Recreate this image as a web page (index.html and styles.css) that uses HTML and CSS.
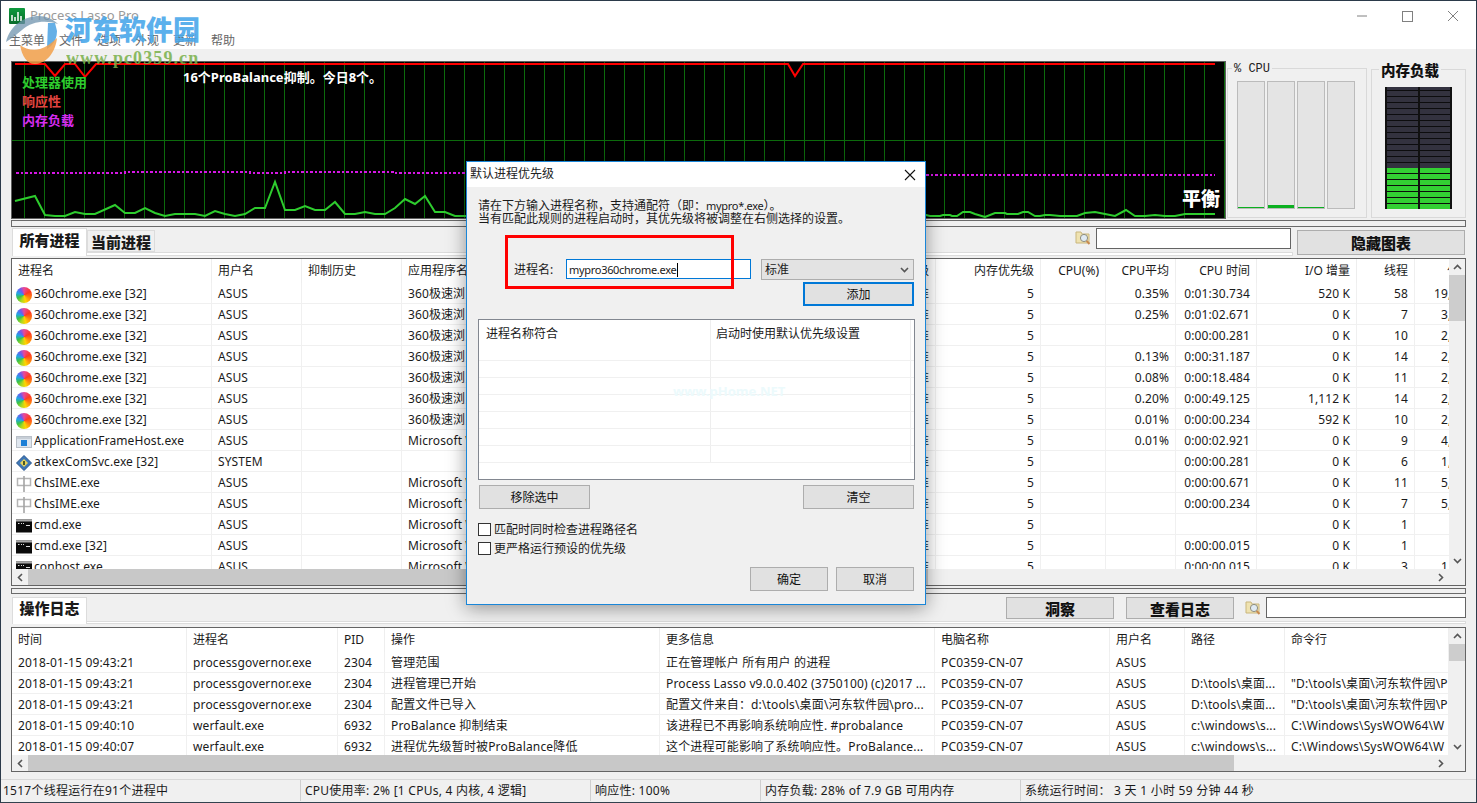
FILE: index.html
```html
<!DOCTYPE html>
<html lang="zh-CN">
<head>
<meta charset="utf-8">
<title>Process Lasso Pro</title>
<link rel="stylesheet" href="styles.css">
</head>
<body>
<svg class="defs" aria-hidden="true">
  <symbol id="i-up" viewBox="0 0 9 6"><path d="M1 5 4.5 1.5 8 5" fill="none" stroke="#555" stroke-width="1.6"/></symbol>
  <symbol id="i-down" viewBox="0 0 9 6"><path d="M1 1 4.5 4.5 8 1" fill="none" stroke="#555" stroke-width="1.6"/></symbol>
  <symbol id="i-left" viewBox="0 0 6 9"><path d="M5 1 1.5 4.5 5 8" fill="none" stroke="#555" stroke-width="1.6"/></symbol>
  <symbol id="i-right" viewBox="0 0 6 9"><path d="M1 1 4.5 4.5 1 8" fill="none" stroke="#555" stroke-width="1.6"/></symbol>
  <symbol id="i-find" viewBox="0 0 16 16">
    <path d="M1 2h5l1 2h7v9H1z" fill="#efe2b0" stroke="#c9b67c"/>
    <circle cx="9" cy="8" r="3.6" fill="#dfeaf3" stroke="#8d8d80"/>
    <path d="M11.6 10.8 14.5 14" stroke="#c88a50" stroke-width="2"/>
  </symbol>
  <symbol id="i-frame" viewBox="0 0 16 16">
    <rect x="0.5" y="2.5" width="15" height="11" fill="#dfe6ee" stroke="#b9c0c8"/>
    <rect x="1" y="3" width="14" height="2" fill="#c7ced6"/>
    <rect x="5" y="6" width="6" height="6" fill="#1c7fd6"/>
  </symbol>
  <symbol id="i-diamond" viewBox="0 0 16 16">
    <path d="M8 0.5 15.5 8 8 15.5 0.5 8z" fill="#3f78b8" stroke="#25528a"/>
    <path d="M8 4 12 8 8 12 4 8z" fill="#e8d35a"/>
    <path d="M7 6h2v4H7z" fill="#4a5a28"/>
  </symbol>
  <symbol id="i-ime" viewBox="0 0 16 16">
    <path d="M1.5 2.5h13v7h-13z" fill="#fff" stroke="#b4b4b4" stroke-width="1.5"/>
    <path d="M8 0v16" stroke="#a4a4a4" stroke-width="1.6"/>
  </symbol>
  <symbol id="i-cmd" viewBox="0 0 16 16">
    <rect width="16" height="13" y="1.5" fill="#0a0a0a"/>
    <rect width="16" height="2" y="1.5" fill="#a9a9a9"/>
    <path d="M2 5h1.5v1H2zM5 5h1v1H5zM7 5h1v1H7zM10 7h4v1h-4z" fill="#ddd"/>
  </symbol>
</svg>

<div class="app">
  <header class="head">
    <div class="titlebar">
      <svg class="appicon" viewBox="0 0 16 16" aria-hidden="true">
        <defs><linearGradient id="appg" x1="0" y1="0" x2="0" y2="1"><stop offset="0" stop-color="#0d9a3e"/><stop offset="1" stop-color="#0a6a2a"/></linearGradient></defs>
        <rect width="16" height="16" rx="1" fill="url(#appg)"/>
        <path d="M3 7v6M6 9v4M9 4v9M12 8v5" stroke="#fff" stroke-width="1.5"/>
      </svg>
      <span class="apptitle">Process Lasso Pro</span>
      <div class="winbtns">
        <svg viewBox="0 0 10 10" class="wb wb-min"><path d="M0 5h10" stroke="#808080"/></svg>
        <svg viewBox="0 0 11 11" class="wb wb-max"><rect x=".5" y=".5" width="10" height="10" fill="none" stroke="#808080"/></svg>
        <svg viewBox="0 0 10 10" class="wb wb-close"><path d="M0 0 10 10M10 0 0 10" stroke="#808080"/></svg>
      </div>
    </div>
    <nav class="menu"><span>主菜单</span><span>文件</span><span>选项</span><span>外观</span><span>更新</span><span>帮助</span></nav>
  </header>

  <section class="graphs">
    <svg class="graph" viewBox="12 62 1213 156" aria-label="图表">
      <defs><pattern id="grid" x="4" y="0" width="20" height="20" patternUnits="userSpaceOnUse"><rect width="1" height="20" fill="#0c6a0c"/></pattern></defs>
      <rect x="12" y="62" width="1213" height="156" fill="#000"/>
      <rect x="12" y="62" width="1213" height="156" fill="url(#grid)"/>
      <path d="M12 140.5H1225" stroke="#0c6a0c"/>
      <polyline class="l-mem" points="16,173 125,173 125,172 250,172 250,173 285,173 285,172 395,172 395,173 466,173"/>
      <polyline class="l-mem" points="926,175 1215,175"/>
      <polyline class="l-cpu" points="15,201 35,196 45,215 55,216 65,216 75,212 85,214 95,214 115,205 125,213 135,213 145,208 155,213 165,216 175,214 195,214 205,216 215,211 225,214 235,216 245,214 255,208 265,208 275,182 285,210 295,210 305,206 315,210 325,210 335,202 345,214 355,214 365,212 375,214 385,214 395,208 405,199 415,204 425,196 435,212 445,212 455,216 465,216 926,215 930,216 940,216 943,215 950,215 952,216 957,216 963,212 970,212 975,214 985,217 995,213 1005,213 1007,214 1018,214 1023,212 1028,212 1035,216 1040,216 1045,215 1050,215 1060,216 1077,216 1085,213 1095,212 1105,214 1115,216 1126,210 1135,216 1145,216 1155,215 1165,216 1175,216 1185,214 1215,214"/>
      <polyline class="l-resp" points="15,64 45,64 55,76 65,64 75,64 85,77 96,64 788,64 795,76 803,64 1215,64"/>
      <text class="g-label g-green" x="22" y="87">处理器使用</text>
      <text class="g-label g-red" x="22" y="106">响应性</text>
      <text class="g-label g-mag" x="22" y="125">内存负载</text>
      <text class="g-label g-white" x="183" y="82">16个ProBalance抑制。今日8个。</text>
      <text class="g-mode" x="1182" y="206">平衡</text>
    </svg>
    <fieldset class="cpubox">
      <legend class="cpulegend">% CPU</legend>
      <div class="bars">
        <div class="bar"><div class="fill f1"></div></div>
        <div class="bar"><div class="fill f3"></div></div>
        <div class="bar"><div class="fill f1"></div></div>
        <div class="bar"></div>
      </div>
    </fieldset>
    <fieldset class="membox">
      <legend class="memlegend">内存负载</legend>
      <div class="meter">
        <div class="mcol"><div class="m-dark"></div><div class="m-green"></div></div>
        <div class="mcol"><div class="m-dark"></div><div class="m-green"></div></div>
      </div>
    </fieldset>
  </section>

  <div class="splitter"></div>

  <section class="toolrow">
    <div class="strip">
      <div class="striphead">
        <div class="tab active tab-wide">所有进程</div>
        <div class="tab tab-mid">当前进程</div>
        <svg class="findicon"><use href="#i-find"/></svg>
        <div class="search s-top"></div>
      </div>
      <div class="band"></div>
    </div>
    <button class="btn btn-bold btn-hide">隐藏图表</button>
  </section>

  <section class="pane pane-proc">
    <div class="tablewrap">
      <div class="tbox tbox-proc">
      <table class="grid proc">
        <colgroup><col class="c200"><col class="c90"><col class="c100"><col class="c300"><col class="c234"><col class="c105"><col class="c65"><col class="c70"><col class="c81"><col class="c100"><col class="c58"><col class="c75"></colgroup>
        <thead><tr><th>进程名</th><th>用户名</th><th>抑制历史</th><th>应用程序名</th><th class="r">优先级</th><th class="r">内存优先级</th><th class="r">CPU(%)</th><th class="r">CPU平均</th><th class="r">CPU 时间</th><th class="r">I/O 增量</th><th class="r">线程</th><th class="r">句柄数</th></tr></thead>
        <tbody>
          <tr><td class="n"><i class="ball"></i>360chrome.exe [32]</td><td>ASUS</td><td></td><td>360极速浏览器</td><td class="r">标准</td><td class="r">5</td><td></td><td class="r">0.35%</td><td class="r">0:01:30.734</td><td class="r">520 K</td><td class="r">58</td><td class="r">19,536 K</td></tr>
          <tr><td class="n"><i class="ball"></i>360chrome.exe [32]</td><td>ASUS</td><td></td><td>360极速浏览器</td><td class="r">标准</td><td class="r">5</td><td></td><td class="r">0.25%</td><td class="r">0:01:02.671</td><td class="r">0 K</td><td class="r">7</td><td class="r">3,532 K</td></tr>
          <tr><td class="n"><i class="ball"></i>360chrome.exe [32]</td><td>ASUS</td><td></td><td>360极速浏览器</td><td class="r">标准</td><td class="r">5</td><td></td><td></td><td class="r">0:00:00.281</td><td class="r">0 K</td><td class="r">10</td><td class="r">2,108 K</td></tr>
          <tr><td class="n"><i class="ball"></i>360chrome.exe [32]</td><td>ASUS</td><td></td><td>360极速浏览器</td><td class="r">标准</td><td class="r">5</td><td></td><td class="r">0.13%</td><td class="r">0:00:31.187</td><td class="r">0 K</td><td class="r">14</td><td class="r">2,240 K</td></tr>
          <tr><td class="n"><i class="ball"></i>360chrome.exe [32]</td><td>ASUS</td><td></td><td>360极速浏览器</td><td class="r">标准</td><td class="r">5</td><td></td><td class="r">0.08%</td><td class="r">0:00:18.484</td><td class="r">0 K</td><td class="r">11</td><td class="r">2,196 K</td></tr>
          <tr><td class="n"><i class="ball"></i>360chrome.exe [32]</td><td>ASUS</td><td></td><td>360极速浏览器</td><td class="r">标准</td><td class="r">5</td><td></td><td class="r">0.20%</td><td class="r">0:00:49.125</td><td class="r">1,112 K</td><td class="r">14</td><td class="r">2,304 K</td></tr>
          <tr><td class="n"><i class="ball"></i>360chrome.exe [32]</td><td>ASUS</td><td></td><td>360极速浏览器</td><td class="r">标准</td><td class="r">5</td><td></td><td class="r">0.01%</td><td class="r">0:00:00.234</td><td class="r">592 K</td><td class="r">10</td><td class="r">2,012 K</td></tr>
          <tr><td class="n"><svg class="ic"><use href="#i-frame"/></svg>ApplicationFrameHost.exe</td><td>ASUS</td><td></td><td>Microsoft Windows</td><td class="r">标准</td><td class="r">5</td><td></td><td class="r">0.01%</td><td class="r">0:00:02.921</td><td class="r">0 K</td><td class="r">9</td><td class="r">4,120 K</td></tr>
          <tr><td class="n"><svg class="ic"><use href="#i-diamond"/></svg>atkexComSvc.exe [32]</td><td>SYSTEM</td><td></td><td></td><td class="r">标准</td><td class="r">5</td><td></td><td></td><td class="r">0:00:00.281</td><td class="r">0 K</td><td class="r">6</td><td class="r">1,024 K</td></tr>
          <tr><td class="n"><svg class="ic"><use href="#i-ime"/></svg>ChsIME.exe</td><td>ASUS</td><td></td><td>Microsoft Windows</td><td class="r">标准</td><td class="r">5</td><td></td><td></td><td class="r">0:00:00.671</td><td class="r">0 K</td><td class="r">11</td><td class="r">5,048 K</td></tr>
          <tr><td class="n"><svg class="ic"><use href="#i-ime"/></svg>ChsIME.exe</td><td>ASUS</td><td></td><td>Microsoft Windows</td><td class="r">标准</td><td class="r">5</td><td></td><td></td><td class="r">0:00:00.234</td><td class="r">0 K</td><td class="r">7</td><td class="r">5,016 K</td></tr>
          <tr><td class="n"><svg class="ic"><use href="#i-cmd"/></svg>cmd.exe</td><td>ASUS</td><td></td><td>Microsoft Windows</td><td class="r">标准</td><td class="r">5</td><td></td><td></td><td></td><td class="r">0 K</td><td class="r">1</td><td class="r"></td></tr>
          <tr><td class="n"><svg class="ic"><use href="#i-cmd"/></svg>cmd.exe [32]</td><td>ASUS</td><td></td><td>Microsoft Windows</td><td class="r">标准</td><td class="r">5</td><td></td><td></td><td class="r">0:00:00.015</td><td class="r">0 K</td><td class="r">1</td><td class="r"></td></tr>
          <tr><td class="n"><svg class="ic"><use href="#i-cmd"/></svg>conhost.exe</td><td>ASUS</td><td></td><td>Microsoft Windows</td><td class="r">标准</td><td class="r">5</td><td></td><td></td><td class="r">0:00:00.015</td><td class="r">0 K</td><td class="r">3</td><td class="r">1,204 K</td></tr>
        </tbody>
      </table>
      </div>
      <div class="vscroll">
        <svg class="arrow-v"><use href="#i-up"/></svg>
        <div class="track"><div class="thumb thumb-proc"></div></div>
        <svg class="arrow-v"><use href="#i-down"/></svg>
      </div>
    </div>
    <div class="hscroll">
      <svg class="arrow-h"><use href="#i-left"/></svg>
      <div class="htrack"><div class="hthumb hthumb-proc"></div></div>
      <svg class="arrow-h"><use href="#i-right"/></svg>
    </div>
  </section>

  <div class="splitter sp2"></div>

  <section class="toolrow tool-log">
    <div class="strip">
      <div class="striphead head-log">
        <div class="tab active tab-log">操作日志</div>
        <button class="btn btn-bold btn-a">洞察</button>
        <button class="btn btn-bold btn-b">查看日志</button>
        <svg class="findicon fi-log"><use href="#i-find"/></svg>
        <div class="search s-log"></div>
      </div>
      <div class="band"></div>
    </div>
  </section>

  <section class="pane pane-log">
    <div class="tablewrap">
      <div class="tbox tbox-log">
      <table class="grid log">
        <colgroup><col class="l175"><col class="l151"><col class="l47"><col class="l275"><col class="l275"><col class="l175"><col class="l75"><col class="l100"><col class="l164"></colgroup>
        <thead><tr><th>时间</th><th>进程名</th><th>PID</th><th>操作</th><th>更多信息</th><th>电脑名称</th><th>用户名</th><th>路径</th><th>命令行</th></tr></thead>
        <tbody>
          <tr><td>2018-01-15 09:43:21</td><td>processgovernor.exe</td><td>2304</td><td>管理范围</td><td>正在管理帐户 所有用户 的进程</td><td>PC0359-CN-07</td><td>ASUS</td><td></td><td></td></tr>
          <tr><td>2018-01-15 09:43:21</td><td>processgovernor.exe</td><td>2304</td><td>进程管理已开始</td><td>Process Lasso v9.0.0.402 (3750100) (c)2017 ...</td><td>PC0359-CN-07</td><td>ASUS</td><td>D:\tools\桌面...</td><td>"D:\tools\桌面\河东软件园\P</td></tr>
          <tr><td>2018-01-15 09:43:21</td><td>processgovernor.exe</td><td>2304</td><td>配置文件已导入</td><td>配置文件来自：d:\tools\桌面\河东软件园\pro...</td><td>PC0359-CN-07</td><td>ASUS</td><td>D:\tools\桌面...</td><td>"D:\tools\桌面\河东软件园\P</td></tr>
          <tr><td>2018-01-15 09:40:10</td><td>werfault.exe</td><td>6932</td><td>ProBalance 抑制结束</td><td>该进程已不再影响系统响应性. #probalance</td><td>PC0359-CN-07</td><td>ASUS</td><td>c:\windows\s...</td><td>C:\Windows\SysWOW64\W</td></tr>
          <tr><td>2018-01-15 09:40:07</td><td>werfault.exe</td><td>6932</td><td>进程优先级暂时被ProBalance降低</td><td>这个进程可能影响了系统响应性。ProBalance...</td><td>PC0359-CN-07</td><td>ASUS</td><td>c:\windows\s...</td><td>C:\Windows\SysWOW64\W</td></tr>
        </tbody>
      </table>
      </div>
      <div class="vscroll">
        <svg class="arrow-v"><use href="#i-up"/></svg>
        <div class="track"><div class="thumb thumb-log"></div></div>
        <svg class="arrow-v"><use href="#i-down"/></svg>
      </div>
    </div>
    <div class="hscroll">
      <svg class="arrow-h"><use href="#i-left"/></svg>
      <div class="htrack"><div class="hthumb hthumb-log"></div></div>
      <svg class="arrow-h"><use href="#i-right"/></svg>
    </div>
  </section>

  <footer class="status">
    <span class="st st1">1517个线程运行在91个进程中</span>
    <span class="st st2">CPU使用率: 2% [1 CPUs, 4 内核, 4 逻辑]</span>
    <span class="st st3">响应性: 100%</span>
    <span class="st st4">内存负载: 28% of 7.9 GB 可用内存</span>
    <span class="st st5">系统运行时间： 3 天 1 小时 59 分钟 44 秒</span>
  </footer>
</div>

<div class="watermark">
  <svg class="wm-logo" viewBox="0 0 56 50" aria-hidden="true">
    <path d="M1 27C5 10 20 1 34 1c7 0 14 3 19 8-12-4-26-3-36 6C11 20 6 24 1 27z" fill="#6f93ad" opacity=".75"/>
    <path d="M43 8h7l2 8c0 6-2 11-6 15l-4 3z" fill="#3f9be0" opacity=".8"/>
    <path d="M15 30c5 4 13 6 20 4 6-2 12-6 17-11-1 12-9 25-21 26-8 1-14-7-16-19z" fill="#f2a04a" opacity=".85"/>
  </svg>
  <span class="wm-cn">河东软件园</span>
  <span class="wm-url">www.pc0359.cn</span>
</div>

<div class="dialog" role="dialog">
  <div class="dlg-title">
    <span>默认进程优先级</span>
    <svg class="dlg-x" viewBox="0 0 12 12"><path d="M1 1 11 11M11 1 1 11" stroke="#111" stroke-width="1.1"/></svg>
  </div>
  <div class="dlg-body">
    <p class="dlg-text">请在下方输入进程名称，支持通配符（即：<span class="narrow">mypro*.exe</span>）。<br>当有匹配此规则的进程启动时，其优先级将被调整在右侧选择的设置。</p>
    <div class="dlg-row">
      <label class="dlg-label">进程名:</label>
      <div class="dlg-input"><span class="narrow">mypro360chrome.exe</span><i class="caret"></i></div>
      <div class="dlg-select"><span>标准</span><svg class="sel-arrow"><use href="#i-down"/></svg></div>
    </div>
    <button class="btn btn-add">添加</button>
    <div class="dlg-list">
      <div class="dl-row dl-head"><span class="dl-a">进程名称符合</span><span class="dl-b">启动时使用默认优先级设置</span></div>
      <div class="dl-row"><span class="dl-a"></span><span class="dl-b"></span></div>
      <div class="dl-row"><span class="dl-a"></span><span class="dl-b"></span></div>
      <div class="dl-row"><span class="dl-a"></span><span class="dl-b"></span></div>
      <div class="dl-row"><span class="dl-a"></span><span class="dl-b"></span></div>
      <div class="dl-row"><span class="dl-a"></span><span class="dl-b"></span></div>
      <div class="dl-row"><span class="dl-a"></span><span class="dl-b"></span></div>
      <div class="dl-row"><span class="dl-a"></span><span class="dl-b"></span></div>
      <span class="dl-wm">www.pHome.NET</span>
    </div>
    <div class="dlg-btns">
      <button class="btn btn-w111">移除选中</button>
      <button class="btn btn-w111">清空</button>
    </div>
    <label class="chk chk1"><i class="box"></i>匹配时同时检查进程路径名</label>
    <label class="chk chk2"><i class="box"></i>更严格运行预设的优先级</label>
    <div class="dlg-foot">
      <button class="btn btn-w78">确定</button>
      <button class="btn btn-w78">取消</button>
    </div>
  </div>
  <div class="redbox"></div>
</div>
</body>
</html>
```
FILE: styles.css
```css
* { box-sizing: border-box; }
html, body { margin: 0; padding: 0; }
body {
  width: 1477px; height: 803px; overflow: hidden; position: relative;
  font: 12px/1.2 "Noto Sans", "Noto Sans CJK SC", sans-serif;
  color: #1a1a1a; background: #f0f0f0;
}
.defs { position: absolute; width: 0; height: 0; }
.app {
  width: 1477px; height: 803px; display: flex; flex-direction: column;
  border: 1px solid #2b3a4a; border-bottom-color: #33424f;
  background: #f0f0f0;
}

/* header */
.head { height: 48px; background: #fff; flex: none; }
.titlebar { height: 31px; display: flex; align-items: center; padding: 0 0 1px 8px; }
.appicon { width: 16px; height: 16px; margin-top: -1px; }
.apptitle { margin-left: 5px; color: #9a9a9a; font-size: 13px; }
.winbtns { margin-left: auto; display: flex; align-items: center; height: 100%; }
.wb { display: block; overflow: visible; }
.wb-min { width: 10px; height: 10px; margin-right: 35px; }
.wb-max { width: 11px; height: 11px; margin-right: 35px; }
.wb-close { width: 10px; height: 10px; margin-right: 18px; }
.menu { display: flex; padding: 2px 0 0 8px; height: 17px; align-items: center; color: #666; }
.menu span { margin-right: 14px; }

/* graphs row */
.graphs { display: flex; flex: none; height: 158px; margin-top: 12px; padding-left: 10px; align-items: flex-start; }
.graph { width: 1215px; height: 158px; border: 1px solid #5e5e5e; display: block; flex: none; }
.l-cpu { fill: none; stroke: #2ecc2e; stroke-width: 2; }
.l-resp { fill: none; stroke: #f00; stroke-width: 2; }
.l-mem { fill: none; stroke: #d616e6; stroke-width: 2; stroke-dasharray: 3 2 2 2; }
.g-label { font: bold 13px "Noto Sans", "Noto Sans CJK SC", sans-serif; }
.g-green { fill: #2ecc2e; }
.g-red { fill: #e2453f; }
.g-mag { fill: #d62cf0; }
.g-white { fill: #fff; }
.g-mode { font: 900 19px "Noto Sans CJK SC", sans-serif; fill: #fff; }

fieldset { margin: 0; min-width: 0; border: 1px solid #d9d9d9; }
.cpubox { width: 140px; height: 157px; margin-left: 1px; padding: 6px 0 0 9px; }
.cpulegend { font: 12px/14px "Liberation Mono", "DejaVu Sans Mono", monospace; color: #222; padding: 0 2px; margin-left: -5px; position: relative; top: 1px; }
.bars { display: flex; gap: 2px; height: 128px; }
.bar { width: 28px; background: #e4e4e4; border: 1px solid #bbb; display: flex; align-items: flex-end; }
.fill { width: 100%; background: #0cb020; }
.f1 { height: 1px; }
.f3 { height: 3px; }
.membox { width: 95px; height: 157px; margin: 0 0 0 4px; padding: 9px 0 0 13px; }
.memlegend { font: 900 14.5px/17px "Noto Sans CJK SC", sans-serif; color: #111; padding: 0 2px; margin-left: -6px; }
.meter { width: 67px; height: 122px; background: #111; display: flex; gap: 2px; padding: 0 2px; }
.mcol { flex: 1; display: flex; flex-direction: column; }
.m-dark { height: 81px; background: repeating-linear-gradient(to top, #33323f 0 5px, #0c0c0e 5px 6px); }
.m-green { height: 41px; background: repeating-linear-gradient(to top, #33d033 0 5px, #0c0c0c 5px 6px); }

.splitter { flex: none; height: 7px; margin: 1px 10px 0 10px; border: 1px solid #6a6a6a; background: #f0f0f0; }
.sp2 { height: 6px; margin-top: 2px; }

/* tool rows */
.toolrow { flex: none; display: flex; height: 30px; padding-left: 11px; padding-right: 10px; }
.strip { width: 1281px; display: flex; flex-direction: column; margin-top: 1px; }
.striphead { height: 24px; display: flex; align-items: flex-end; }
.band { height: 4px; background: #fff; border: 1px solid #dcdcdc; }
.tab { font-weight: 900; font-size: 15px; font-family: "Noto Sans CJK SC", sans-serif; display: flex; align-items: center; justify-content: center; background: #f0f0f0; border: 1px solid #dcdcdc; }
.tab.active { background: #fff; border-bottom: 0; position: relative; z-index: 1; margin-bottom: -4px; padding-bottom: 5px; }
.tab-wide { width: 75px; height: 28px; }
.tab-mid { width: 68px; height: 22px; padding-top: 1px; }
.findicon { width: 16px; height: 16px; margin-left: auto; margin-bottom: 6px; margin-right: 5px; }
.search { background: #fff; border: 1px solid #646464; }
.s-top { width: 195px; height: 21px; margin-bottom: 3px; margin-right: 2px; }
.btn-hide { width: 168px; height: 25px; margin-left: 4px; margin-top: 3px; }

.btn { font: 12px "Noto Sans", "Noto Sans CJK SC", sans-serif; color: #111; background: #e1e1e1; border: 1px solid #adadad; padding: 0; display: block; }
.btn-bold { font: 900 15px "Noto Sans CJK SC", sans-serif; }

.tool-log { height: 33px; }
.tool-log .strip { width: 100%; margin-top: 0; }
.head-log { height: 27px; }
.tab.tab-log { width: 75px; height: 27px; margin-bottom: -3px; padding-bottom: 7px; }
.tool-log .band { height: 3px; }
.btn-a { width: 108px; height: 22px; margin-left: auto; margin-bottom: 2px; padding-bottom: 4px; }
.btn-b { width: 108px; height: 22px; margin-left: 12px; margin-bottom: 2px; padding-bottom: 4px; }
.fi-log { margin-left: 11px; margin-bottom: 5px; }
.s-log { width: 200px; height: 21px; margin-bottom: 3px; }

/* list panes */
.pane { flex: none; margin: 1px 10px 0 10px; border: 1px solid #646464; background: #f0f0f0; display: flex; flex-direction: column; }
.pane-proc { height: 328px; margin-top: 1px; }
.pane-log { height: 145px; margin-top: 0; }
.tablewrap { flex: 1; display: flex; overflow: hidden; min-height: 0; }
.tbox { width: 1437px; flex: none; background: #fff; overflow: hidden; }
.grid { table-layout: fixed; border-collapse: separate; border-spacing: 0; background: #fff; }
.proc { width: 1478px; }
.log { width: 1437px; }
.grid th { height: 24px; line-height: 14px; font-weight: 400; text-align: left; padding: 0 6px; white-space: nowrap; overflow: hidden; border-right: 1px solid #eee; vertical-align: middle; background: #fff; }
.grid td { height: 21px; line-height: 14px; padding: 2px 6px 0; white-space: nowrap; overflow: hidden; border-right: 1px solid #f0f0f0; border-bottom: 1px solid #f0f0f0; vertical-align: middle; letter-spacing: .1px; }
.log td { letter-spacing: .15px; }
.grid .r { text-align: right; }
.grid .n { padding-left: 4px; }
.c200 { width: 200px; } .c90 { width: 90px; } .c100 { width: 100px; } .c300 { width: 300px; }
.c234 { width: 234px; } .c105 { width: 105px; } .c65 { width: 65px; } .c70 { width: 70px; }
.c81 { width: 81px; } .c58 { width: 58px; } .c75 { width: 75px; }
.l175 { width: 175px; } .l151 { width: 151px; } .l47 { width: 47px; } .l275 { width: 275px; }
.l75 { width: 75px; } .l100 { width: 100px; } .l164 { width: 164px; }
.ball { display: inline-block; width: 16px; height: 16px; border-radius: 50%; margin: -2px 2px -2px 0; vertical-align: -3px;
  background: conic-gradient(#e8489a 0deg, #ff3b22 60deg, #ff7a10 110deg, #ffd400 165deg, #a8d820 205deg, #3ac24a 245deg, #22a5e6 285deg, #6a5af0 325deg, #e8489a 360deg); }
.ic { display: inline-block; width: 16px; height: 16px; margin: -2px 2px -2px 0; vertical-align: -3px; }

.vscroll { width: 16px; flex: none; display: flex; flex-direction: column; background: #f0f0f0; }
.arrow-v { width: 9px; height: 6px; margin: 5px auto; flex: none; }
.track { flex: 1; }
.thumb { background: #cdcdcd; }
.thumb-proc { height: 46px; }
.thumb-log { height: 17px; }
.hscroll { height: 16px; flex: none; display: flex; align-items: center; background: #f0f0f0; }
.arrow-h { width: 6px; height: 9px; margin: 0 5px; flex: none; }
.htrack { flex: 1; height: 100%; }
.hthumb { height: 100%; background: #c8c8c8; }
.hthumb-proc { width: 900px; }
.hthumb-log { width: 1206px; }
.pane-log .arrow-h:last-child { margin-right: 21px; }
.pane-proc .arrow-h:last-child { margin-right: 21px; }

/* status bar */
.status { flex: none; height: 22px; margin-top: 7px; display: flex; align-items: center; border-top: 1px solid #d8d8d8; }
.st { height: 100%; display: flex; align-items: center; white-space: nowrap; border-left: 1px solid #cfcfcf; padding: 2px 0 0 4px; letter-spacing: .25px; }
.st1 { width: 299px; border-left: 0; padding-left: 2px; }
.st2 { width: 290px; }
.st3 { width: 170px; }
.st4 { width: 260px; }
.st5 { flex: 1; }

/* watermark */
.watermark { position: absolute; left: 5px; top: 15px; width: 200px; height: 52px; z-index: 5; pointer-events: none; }
.wm-logo { position: absolute; left: 0; top: 0; width: 56px; height: 50px; }
.wm-cn { position: absolute; left: 60px; top: -6px; font: 900 27px/40px "Noto Sans CJK SC", sans-serif; color: #4aa8ea; opacity: .9; white-space: nowrap; }
.wm-url { position: absolute; left: 61px; top: 33px; font: bold 18px/20px "Liberation Serif", serif; letter-spacing: 1.1px; color: #79b04a; opacity: .85; white-space: nowrap; }

/* dialog */
.dialog { position: absolute; left: 466px; top: 161px; width: 460px; height: 444px; background: #f0f0f0; border: 1px solid #1a86d8; box-shadow: 0 3px 18px rgba(0,0,0,.4); z-index: 10; display: flex; flex-direction: column; }
.dlg-title { height: 25px; background: #fff; display: flex; align-items: center; padding: 0 8px 0 3px; justify-content: space-between; flex: none; color: #222; }
.dlg-x { width: 12px; height: 12px; margin-right: 1px; }
.dlg-body { padding: 12px 9px 0 11px; }
.dlg-text { margin: 0; line-height: 13px; white-space: nowrap; }
.narrow { font-size: 11px; letter-spacing: -.3px; }
.dlg-row { display: flex; margin-top: 34px; height: 21px; align-items: stretch; }
.dlg-label { width: 88px; padding: 2px 0 0 36px; display: flex; align-items: center; white-space: nowrap; }
.dlg-input { width: 185px; height: 20px; border: 1px solid #0078d7; background: #fff; padding: 1px 0 0 2px; display: flex; align-items: center; white-space: nowrap; }
.caret { width: 1px; height: 14px; background: #000; margin-left: 1px; }
.dlg-select { width: 153px; margin-left: 10px; background: #e3e3e3; border: 1px solid #adadad; display: flex; align-items: center; justify-content: space-between; padding: 1px 3px 0; }
.sel-arrow { width: 9px; height: 6px; margin-right: 1px; }
.btn-add { width: 111px; height: 24px; margin: 2px 2px 0 auto; border: 2px solid #0078d7; }
.dlg-list { width: 437px; height: 161px; margin-top: 13px; background: #fff; border: 1px solid #828790; overflow: hidden; position: relative; }
.dl-row { display: flex; height: 17px; border-bottom: 1px solid #f0f0f0; }
.dl-head { height: 24px; border-bottom: 0; }
.dl-a { width: 232px; border-right: 1px solid #eee; padding-left: 7px; line-height: 27px; }
.dl-b { width: 200px; border-right: 1px solid #eee; padding-left: 5px; line-height: 27px; }
.dl-wm { position: absolute; left: 194px; top: 64px; color: #ecfafc; font-weight: 700; font-size: 13px; }
.dlg-btns { display: flex; justify-content: space-between; margin-top: 5px; padding: 0 2px 0 1px; }
.btn-w111 { width: 111px; height: 24px; }
.chk { display: flex; align-items: center; height: 13px; white-space: nowrap; line-height: 17px; }
.chk1 { margin-top: 14px; }
.chk2 { margin-top: 6px; }
.box { width: 13px; height: 13px; border: 1px solid #333; background: #fff; margin-right: 3px; flex: none; }
.dlg-foot { display: flex; justify-content: flex-end; gap: 8px; margin-top: 12px; padding-right: 2px; }
.btn-w78 { width: 78px; height: 24px; }
.redbox { position: absolute; left: 38px; top: 73px; width: 229px; height: 54px; border: 3px solid #f00; pointer-events: none; }
```
